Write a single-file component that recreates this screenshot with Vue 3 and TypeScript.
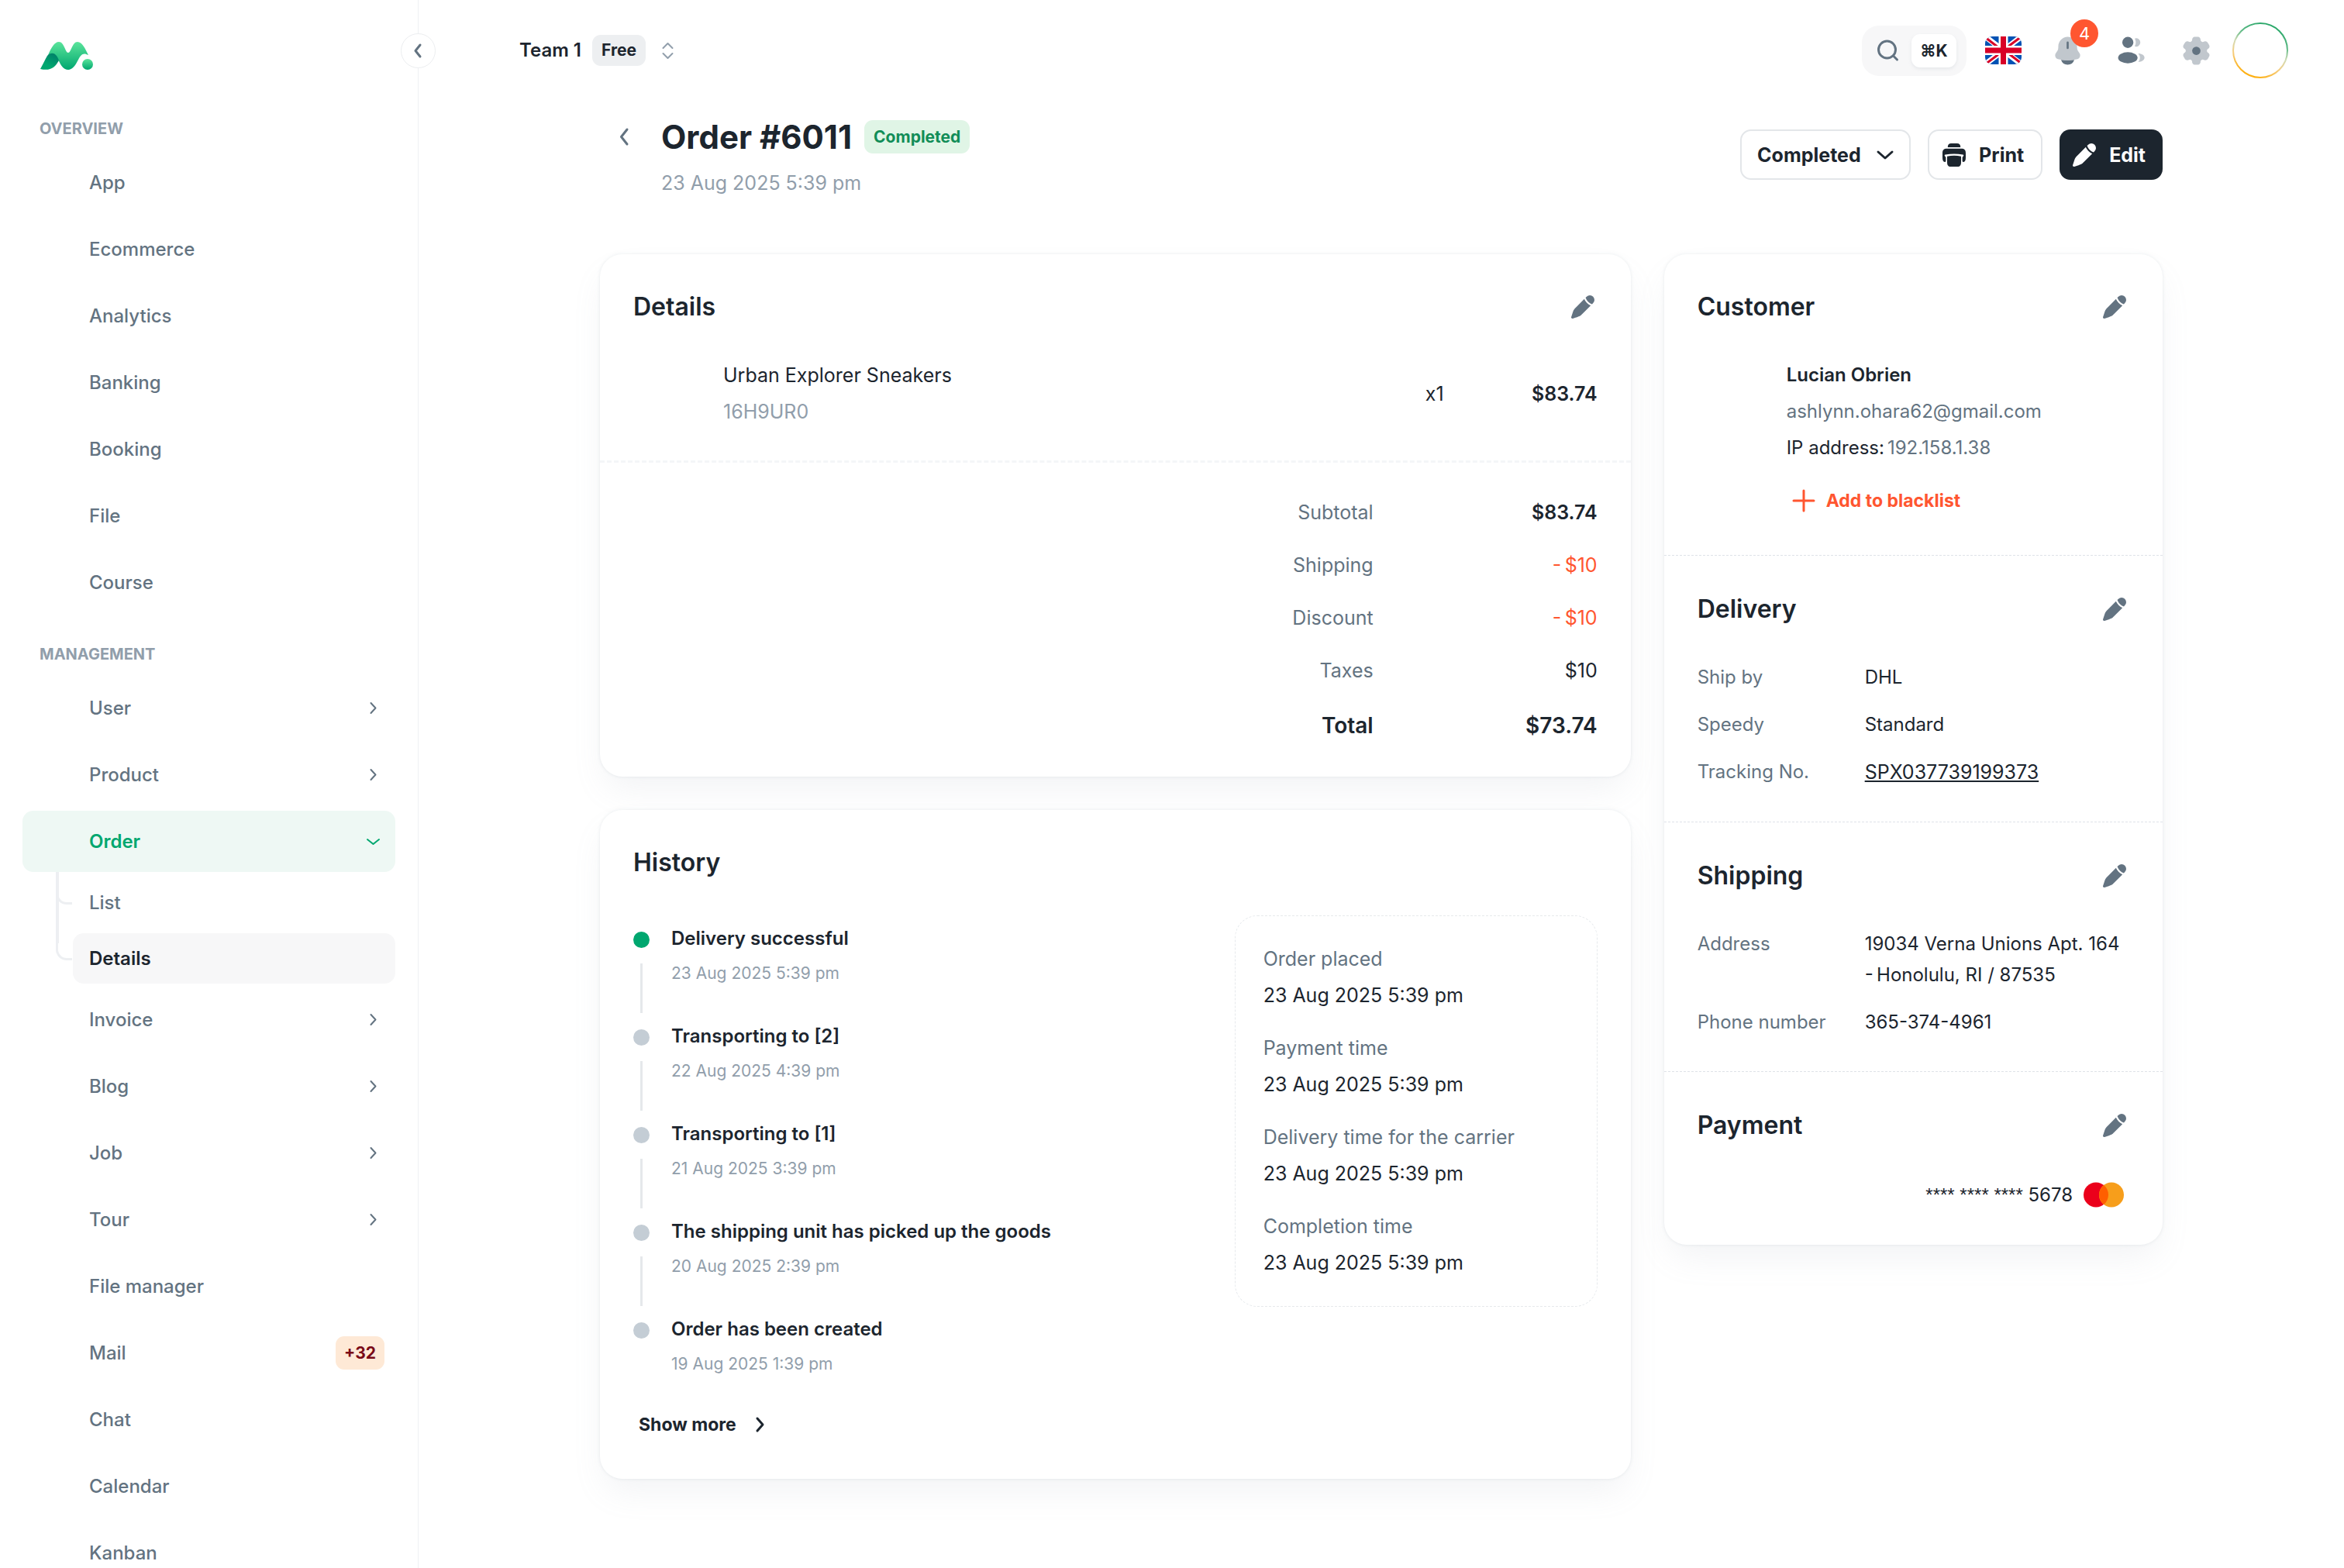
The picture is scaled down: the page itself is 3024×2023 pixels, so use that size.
<script setup lang="ts">
import { ref } from 'vue'

interface NavItem {
  label: string
  expandable?: boolean
  active?: boolean
  badge?: string
  children?: { label: string; current?: boolean }[]
}

interface NavSection {
  title: string
  items: NavItem[]
}

const sections: NavSection[] = [
  {
    title: 'OVERVIEW',
    items: ['App', 'Ecommerce', 'Analytics', 'Banking', 'Booking', 'File', 'Course'].map((label) => ({ label })),
  },
  {
    title: 'MANAGEMENT',
    items: [
      { label: 'User', expandable: true },
      { label: 'Product', expandable: true },
      {
        label: 'Order',
        active: true,
        children: [{ label: 'List' }, { label: 'Details', current: true }],
      },
      { label: 'Invoice', expandable: true },
      { label: 'Blog', expandable: true },
      { label: 'Job', expandable: true },
      { label: 'Tour', expandable: true },
      { label: 'File manager' },
      { label: 'Mail', badge: '+32' },
      { label: 'Chat' },
      { label: 'Calendar' },
      { label: 'Kanban' },
    ],
  },
]

const status = ref('Completed')

const totals = [
  { label: 'Subtotal', value: '$83.74', kind: 'strong' },
  { label: 'Shipping', value: '-\u2009$10', kind: 'minus' },
  { label: 'Discount', value: '-\u2009$10', kind: 'minus' },
  { label: 'Taxes', value: '$10', kind: '' },
  { label: 'Total', value: '$73.74', kind: 'total' },
]

const timeline = [
  { title: 'Delivery successful', time: '23 Aug 2025 5:39 pm' },
  { title: 'Transporting to [2]', time: '22 Aug 2025 4:39 pm' },
  { title: 'Transporting to [1]', time: '21 Aug 2025 3:39 pm' },
  { title: 'The shipping unit has picked up the goods', time: '20 Aug 2025 2:39 pm' },
  { title: 'Order has been created', time: '19 Aug 2025 1:39 pm' },
]

const milestones = [
  { label: 'Order placed', value: '23 Aug 2025 5:39 pm' },
  { label: 'Payment time', value: '23 Aug 2025 5:39 pm' },
  { label: 'Delivery time for the carrier', value: '23 Aug 2025 5:39 pm' },
  { label: 'Completion time', value: '23 Aug 2025 5:39 pm' },
]

const penPath =
  'M11.4 18.161l7.396-7.396a10.3 10.3 0 0 1-3.326-2.234 10.3 10.3 0 0 1-2.235-3.327L5.839 12.6c-.577.577-.866.866-1.114 1.184a6.6 6.6 0 0 0-.749 1.211c-.173.364-.302.752-.56 1.526l-1.362 4.083a1.06 1.06 0 0 0 1.342 1.342l4.083-1.362c.775-.258 1.162-.387 1.526-.56q.647-.308 1.211-.749c.318-.248.607-.537 1.184-1.114m9.448-9.448a3.932 3.932 0 0 0-5.561-5.561l-.887.887.038.111a8.75 8.75 0 0 0 2.092 3.32 8.75 8.75 0 0 0 3.431 2.13z'
</script>

<template>
  <div class="shell">
    <aside class="sidebar">
      <a class="logo" href="#" aria-label="Home">
        <svg width="68" height="36" viewBox="0 0 68 36">
          <defs>
            <linearGradient id="logo-light" x1="0" y1="0" x2="0" y2="1">
              <stop offset="0" stop-color="#5BE49B" />
              <stop offset="1" stop-color="#00A76F" />
            </linearGradient>
            <linearGradient id="logo-dark" x1="1" y1="0" x2="0.4" y2="1">
              <stop offset="0" stop-color="#007867" />
              <stop offset="0.8" stop-color="#00A76F" />
            </linearGradient>
          </defs>
          <path
            fill="url(#logo-light)"
            d="M10 17C14 8 18 0 24 0c7 0 8 14 12 14S41 0 48 0c6 0 10 9 14 17-7-4-10 0-13 6-4 8-8 13-13 13-6 0-9-5-13-13-2-5-6-9-13-6z"
          />
          <path fill="url(#logo-dark)" d="M0 35c4-7 6-12 9-17 2-3 8-5 11-1 2 2 3 4 4 7-5 9-11 14-24 11z" />
          <circle cx="61" cy="29" r="7" fill="url(#logo-light)" />
        </svg>
      </a>
      <nav aria-label="Main">
        <section v-for="section in sections" :key="section.title" class="nav-section">
          <h2 class="nav-title">{{ section.title }}</h2>
          <ul class="nav-list">
            <li v-for="item in section.items" :key="item.label">
              <a href="#" class="nav-item" :class="{ active: item.active }">
                <span class="nav-label">{{ item.label }}</span>
                <span v-if="item.badge" class="nav-badge">{{ item.badge }}</span>
                <svg v-if="item.expandable" class="nav-arrow" viewBox="0 0 29 29">
                  <path d="M11.5 8l6 6.5-6 6.5" />
                </svg>
                <svg v-if="item.active" class="nav-arrow" viewBox="0 0 29 29">
                  <path d="M7 12l7.5 6 7.5-6" />
                </svg>
              </a>
              <ul v-if="item.children" class="sub-list">
                <li v-for="child in item.children" :key="child.label" class="sub-row">
                  <a href="#" class="sub-item" :class="{ current: child.current }">{{ child.label }}</a>
                </li>
              </ul>
            </li>
          </ul>
        </section>
      </nav>
      <button class="collapse" type="button" aria-label="Collapse menu">
        <svg width="29" height="29" viewBox="0 0 29 29"><path d="M17 7l-6 7.500 6 7.500" /></svg>
      </button>
    </aside>

    <div class="main">
      <header class="topbar">
        <button class="workspace" type="button">
          <span>Team 1</span>
          <span class="plan">Free</span>
          <svg width="29" height="29" viewBox="0 0 29 29"><path d="M8.500 11l6-6 6 6M8.500 18l6 6 6-6" /></svg>
        </button>
        <div class="tools">
          <button class="search" type="button" aria-label="Search">
            <svg width="34" height="34" viewBox="0 0 34 34">
              <circle cx="15.500" cy="16" r="11" />
              <path d="M23.500 24l5 5" />
            </svg>
            <kbd>⌘K</kbd>
          </button>
          <button class="tool" type="button" aria-label="Language">
            <svg class="flag" width="47" height="36" viewBox="0 0 47 36">
              <path fill="#0052B4" d="M0 0h47v36H0z" />
              <path stroke="#fff" stroke-width="7" d="M0 0l47 36M47 0L0 36" />
              <path stroke="#D80027" stroke-width="3" d="M0 1l20 15.500M47 0L27 15M0 36l20-15M47 35L27 19.500" />
              <path stroke="#fff" stroke-width="12" d="M23.500 0v36M0 18h47" />
              <path stroke="#D80027" stroke-width="7" d="M23.500 0v36M0 18h47" />
            </svg>
          </button>
          <button class="tool" type="button" aria-label="Notifications">
            <svg width="43" height="43" viewBox="0 0 24 24" fill="#637381">
              <path
                opacity="0.4"
                d="M18.750 9v.704c0 .845.24 1.671.692 2.374l1.108 1.723c1.011 1.574.239 3.713-1.520 4.210a25.800 25.800 0 0 1-14.060 0c-1.759-.497-2.531-2.636-1.520-4.210l1.108-1.723a4.400 4.400 0 0 0 .693-2.374V9c0-3.866 3.022-7 6.749-7s6.750 3.134 6.750 7"
              />
              <path
                d="M12.750 6a.75.75 0 0 0-1.500 0v4a.75.75 0 0 0 1.500 0zM7.243 18.545a5.002 5.002 0 0 0 9.513 0c-3.145.59-6.367.59-9.513 0"
              />
            </svg>
            <span class="count">4</span>
          </button>
          <button class="tool" type="button" aria-label="Contacts">
            <svg width="43" height="43" viewBox="0 0 24 24" fill="#637381">
              <circle cx="9" cy="6" r="4" />
              <ellipse cx="9" cy="17" rx="7" ry="4" />
              <path
                opacity="0.4"
                d="M21 17c0 1.657-2.036 3-4.521 3 .732-.8 1.236-1.805 1.236-2.998 0-1.195-.505-2.200-1.239-3.001C18.962 14 21 15.344 21 17M18 6a3 3 0 0 1-4.029 2.820A5.700 5.700 0 0 0 14.714 6c0-1.025-.27-1.987-.742-2.819A3 3 0 0 1 18 6.001"
              />
            </svg>
          </button>
          <button class="tool" type="button" aria-label="Settings">
            <svg width="43" height="43" viewBox="0 0 24 24" fill="#637381">
              <path
                opacity="0.4"
                d="M13.779 2.152C13.409 2 12.939 2 12 2s-1.408 0-1.779.152a2 2 0 0 0-1.090 1.083c-.094.223-.13.484-.145.863a1.620 1.620 0 0 1-.796 1.353 1.640 1.640 0 0 1-1.579.008c-.338-.178-.583-.276-.825-.308a2.030 2.030 0 0 0-1.490.396c-.318.242-.553.646-1.022 1.453-.47.807-.704 1.210-.757 1.605-.07.526.074 1.058.4 1.479.148.192.357.353.68.555.477.297.783.803.783 1.361s-.306 1.064-.782 1.360c-.324.203-.533.364-.682.556a2 2 0 0 0-.399 1.479c.053.394.287.798.757 1.605s.704 1.210 1.022 1.453c.424.323.96.465 1.490.396.242-.032.487-.13.825-.308a1.640 1.640 0 0 1 1.580.008c.486.28.774.795.795 1.353.015.38.051.64.145.863.204.49.596.88 1.090 1.083.37.152.84.152 1.779.152s1.409 0 1.779-.152a2 2 0 0 0 1.090-1.083c.094-.223.13-.483.145-.863.02-.558.309-1.074.796-1.353a1.640 1.640 0 0 1 1.579-.008c.338.178.583.276.825.308.53.07 1.066-.073 1.490-.396.318-.242.553-.646 1.022-1.453.47-.807.704-1.210.757-1.605a2 2 0 0 0-.4-1.479c-.148-.192-.357-.353-.68-.555-.477-.297-.783-.803-.783-1.361s.306-1.064.782-1.360c.324-.203.533-.364.682-.556a2 2 0 0 0 .399-1.479c-.053-.394-.287-.798-.757-1.605s-.704-1.210-1.022-1.453a2.030 2.030 0 0 0-1.490-.396c-.242.032-.487.13-.825.308a1.640 1.640 0 0 1-1.580-.008 1.620 1.620 0 0 1-.795-1.353c-.015-.38-.051-.64-.145-.863a2 2 0 0 0-1.090-1.083"
              />
              <circle cx="12" cy="12" r="3" />
            </svg>
          </button>
          <button class="avatar" type="button" aria-label="Account">
            <svg width="72" height="72" viewBox="0 0 72 72">
              <defs>
                <linearGradient id="ring" x1="0.700" y1="0" x2="0.300" y2="1">
                  <stop offset="0" stop-color="#22A565" />
                  <stop offset="0.300" stop-color="#5DB985" />
                  <stop offset="0.500" stop-color="#D3DBB5" />
                  <stop offset="0.700" stop-color="#F5CD80" />
                  <stop offset="1" stop-color="#FFAB00" />
                </linearGradient>
              </defs>
              <circle cx="36" cy="36" r="35" fill="none" stroke="url(#ring)" stroke-width="2" />
            </svg>
          </button>
        </div>
      </header>

      <main class="container">
        <div class="page-head">
          <div class="heading">
            <a class="back" href="#" aria-label="Back to orders">
              <svg width="36" height="36" viewBox="0 0 36 36"><path d="M20 8l-7.500 9.500 7.500 9.500" /></svg>
            </a>
            <div>
              <div class="title-row">
                <h1>Order #6011</h1>
                <span class="state">Completed</span>
              </div>
              <p class="placed">23 Aug 2025 5:39 pm</p>
            </div>
          </div>
          <div class="actions">
            <label class="status">
              <select v-model="status" aria-label="Order status">
                <option>Completed</option>
                <option>Pending</option>
                <option>Refunded</option>
              </select>
              <svg width="36" height="36" viewBox="0 0 36 36"><path d="M9 14l9 8 9-8" /></svg>
            </label>
            <button class="btn outlined" type="button">
              <svg width="36" height="36" viewBox="0 0 24 24" fill="currentColor">
                <path d="M6.500 5.300C6.500 3 7.500 2 9.500 2h5c2 0 3 1 3 3.300z" />
                <path
                  d="M6 6.500h12c3 0 4 1.300 4 4V14c0 2.500-.5 3.700-2 4-.6 0-.9-.4-.9-1v-3l.9-1.200c.4-.5.2-1-.4-1.100a46 46 0 0 0-15.200 0c-.6.1-.8.6-.4 1.100l.9 1.200v3c0 .6-.3 1-.9 1-1.500-.3-2-1.500-2-4v-3.500c0-2.700 1-4 4-4"
                />
                <path d="M6 13.200c3.800-.9 8.200-.9 12 0V18c0 2.800-.9 4-3 4H9c-2.100 0-3-1.200-3-4z" />
              </svg>
              Print
            </button>
            <button class="btn solid" type="button">
              <svg width="36" height="36" viewBox="0 0 24 24" fill="currentColor"><path :d="penPath" /></svg>
              Edit
            </button>
          </div>
        </div>

        <div class="grid">
          <div class="wide">
            <section class="card">
              <header class="card-head">
                <h2>Details</h2>
                <button class="pen" type="button" aria-label="Edit details">
                  <svg width="36" height="36" viewBox="0 0 24 24" fill="currentColor"><path :d="penPath" /></svg>
                </button>
              </header>
              <div class="product">
                <div class="product-text">
                  <span>Urban Explorer Sneakers</span>
                  <span class="muted">16H9UR0</span>
                </div>
                <span>x1</span>
                <span class="product-price">$83.74</span>
              </div>
              <dl class="totals">
                <div v-for="row in totals" :key="row.label" :class="row.kind">
                  <dt>{{ row.label }}</dt>
                  <dd>{{ row.value }}</dd>
                </div>
              </dl>
            </section>

            <section class="card">
              <header class="card-head"><h2>History</h2></header>
              <div class="history">
                <div class="history-main">
                  <ol class="timeline">
                    <li v-for="(event, index) in timeline" :key="event.title">
                      <div class="rail">
                        <span class="dot" :class="{ done: index === 0 }"></span>
                        <span v-if="index < timeline.length - 1" class="line"></span>
                      </div>
                      <div class="event">
                        <span class="event-title">{{ event.title }}</span>
                        <time>{{ event.time }}</time>
                      </div>
                    </li>
                  </ol>
                  <button class="text-btn" type="button">
                    Show more
                    <svg width="32" height="32" viewBox="0 0 32 32"><path d="M13 8l7 8-7 8" /></svg>
                  </button>
                </div>
                <dl class="milestones">
                  <div v-for="item in milestones" :key="item.label">
                    <dt>{{ item.label }}</dt>
                    <dd>{{ item.value }}</dd>
                  </div>
                </dl>
              </div>
            </section>
          </div>

          <aside class="card side">
            <section class="block">
              <header class="card-head">
                <h2>Customer</h2>
                <button class="pen" type="button" aria-label="Edit customer">
                  <svg width="36" height="36" viewBox="0 0 24 24" fill="currentColor"><path :d="penPath" /></svg>
                </button>
              </header>
              <div class="customer">
                <span class="customer-name">Lucian Obrien</span>
                <span class="secondary">ashlynn.ohara62@gmail.com</span>
                <span class="ip">IP address:<span class="secondary">192.158.1.38</span></span>
                <button class="text-btn danger" type="button">
                  <svg width="36" height="36" viewBox="0 0 36 36"><path d="M18 5v26M5 18h26" /></svg>
                  Add to blacklist
                </button>
              </div>
            </section>

            <section class="block">
              <header class="card-head">
                <h2>Delivery</h2>
                <button class="pen" type="button" aria-label="Edit delivery">
                  <svg width="36" height="36" viewBox="0 0 24 24" fill="currentColor"><path :d="penPath" /></svg>
                </button>
              </header>
              <dl class="facts">
                <div>
                  <dt>Ship by</dt>
                  <dd>DHL</dd>
                </div>
                <div>
                  <dt>Speedy</dt>
                  <dd>Standard</dd>
                </div>
                <div>
                  <dt>Tracking No.</dt>
                  <dd><a class="tracking" href="#">SPX037739199373</a></dd>
                </div>
              </dl>
            </section>

            <section class="block">
              <header class="card-head">
                <h2>Shipping</h2>
                <button class="pen" type="button" aria-label="Edit shipping">
                  <svg width="36" height="36" viewBox="0 0 24 24" fill="currentColor"><path :d="penPath" /></svg>
                </button>
              </header>
              <dl class="facts">
                <div>
                  <dt>Address</dt>
                  <dd>19034 Verna Unions Apt. 164<br />-&#8201;Honolulu, RI / 87535</dd>
                </div>
                <div>
                  <dt>Phone number</dt>
                  <dd>365-374-4961</dd>
                </div>
              </dl>
            </section>

            <section class="block">
              <header class="card-head">
                <h2>Payment</h2>
                <button class="pen" type="button" aria-label="Edit payment">
                  <svg width="36" height="36" viewBox="0 0 24 24" fill="currentColor"><path :d="penPath" /></svg>
                </button>
              </header>
              <div class="payment">
                <span><span class="mask">**** **** **** </span>5678</span>
                <svg width="66" height="43" viewBox="0 0 66 43" role="img" aria-label="Mastercard">
                  <circle cx="23" cy="21.500" r="16" fill="#EB001B" />
                  <circle cx="43" cy="21.500" r="16" fill="#F79E1B" />
                  <path fill="#FF5F00" d="M33 9a16 16 0 0 1 0 25 16 16 0 0 1 0-25z" />
                </svg>
              </div>
            </section>
          </aside>
        </div>
      </main>
    </div>
  </div>
</template>

<style>
body {
  margin: 0;
  background: #fff;
}
</style>

<style scoped>
.shell {
  display: flex;
  min-height: 100vh;
  background: #fff;
  color: #1c252e;
  font-family: Inter, "Liberation Sans", sans-serif;
  font-size: 24px;
  line-height: 40px;
}
.shell *,
.shell *::before,
.shell *::after {
  box-sizing: border-box;
}
h1,
h2,
p,
ul,
ol,
dl,
dd {
  margin: 0;
  padding: 0;
}
ul,
ol {
  list-style: none;
}
a {
  color: inherit;
  text-decoration: none;
}
button,
select {
  margin: 0;
  padding: 0;
  border: 0;
  background: none;
  color: inherit;
  font: inherit;
}
svg {
  display: block;
  flex: none;
}

/* Sidebar */
.sidebar {
  position: sticky;
  top: 0;
  z-index: 1;
  flex: none;
  width: 540px;
  height: 100vh;
  border-right: 1px solid #eff1f3;
}
.sidebar nav {
  height: calc(100vh - 113px);
  overflow: hidden;
  padding: 0 29px;
}
.logo {
  display: block;
  width: 68px;
  padding: 54px 0 23px;
  margin-left: 52px;
}
.nav-title {
  padding: 38px 22px 15px;
  color: #919eab;
  font-size: 20px;
  font-weight: 700;
  line-height: 30px;
}
.nav-list {
  display: flex;
  flex-direction: column;
  gap: 7px;
}
.nav-item {
  display: flex;
  align-items: center;
  height: 79px;
  padding: 0 14px 0 86px;
  border-radius: 14px;
  color: #637381;
  font-weight: 500;
}
.nav-item.active {
  background: #eef8f4;
  color: #00a76f;
  font-weight: 600;
}
.nav-label {
  flex: 1;
}
.nav-arrow {
  width: 29px;
  height: 29px;
  fill: none;
  stroke: currentColor;
  stroke-width: 2;
  stroke-linecap: round;
  stroke-linejoin: round;
}
.nav-badge {
  padding: 0 11px;
  border-radius: 11px;
  background: #fee9d6;
  color: #7a0916;
  font-size: 21px;
  font-weight: 700;
  line-height: 43px;
}
.sub-list {
  position: relative;
  display: flex;
  flex-direction: column;
  gap: 7px;
  padding: 7px 0 0 65px;
}
.sub-list::before {
  content: "";
  position: absolute;
  top: 0;
  left: 43px;
  width: 4px;
  height: 92px;
  background: #edeff2;
}
.sub-row {
  position: relative;
}
.sub-row::before {
  content: "";
  position: absolute;
  top: 12px;
  left: -22px;
  width: 21px;
  height: 23px;
  border: solid #edeff2;
  border-width: 0 0 3px 3px;
  border-bottom-left-radius: 14px;
}
.sub-item {
  display: flex;
  align-items: center;
  height: 65px;
  padding: 0 21px;
  border-radius: 14px;
  color: #637381;
  font-weight: 500;
}
.sub-item.current {
  background: #f7f7f8;
  color: #1c252e;
  font-weight: 600;
}
.collapse {
  position: absolute;
  top: 43px;
  right: -23px;
  display: grid;
  place-items: center;
  width: 45px;
  height: 45px;
  border: 1px solid #eceef0;
  border-radius: 50%;
  background: #fff;
}
.collapse path,
.back path {
  fill: none;
  stroke: #637381;
  stroke-width: 3;
  stroke-linecap: round;
  stroke-linejoin: round;
}

/* Top bar */
.main {
  flex: 1;
  min-width: 0;
}
.topbar {
  display: flex;
  align-items: center;
  justify-content: space-between;
  height: 130px;
  padding: 0 72px 0 130px;
}
.workspace {
  display: flex;
  align-items: center;
  gap: 14px;
  font-weight: 600;
}
.plan {
  padding: 0 12px;
  border-radius: 11px;
  background: #edeff1;
  font-size: 21px;
  font-weight: 700;
}
.workspace path {
  fill: none;
  stroke: #919eab;
  stroke-width: 2;
  stroke-linecap: round;
  stroke-linejoin: round;
}
.tools {
  display: flex;
  align-items: center;
  gap: 11px;
}
.search {
  display: flex;
  align-items: center;
  gap: 13px;
  height: 65px;
  padding: 0 13px 0 17px;
  border-radius: 22px;
  background: #f7f7f8;
}
.search svg {
  fill: none;
  stroke: #637381;
  stroke-width: 3;
  stroke-linecap: round;
}
kbd {
  width: 58px;
  border-radius: 11px;
  background: #fff;
  box-shadow: 0 2px 4px rgba(145, 158, 171, 0.16);
  font-family: inherit;
  font-size: 21px;
  font-weight: 700;
  line-height: 43px;
  text-align: center;
}
.tool {
  position: relative;
  display: grid;
  place-items: center;
  width: 72px;
  height: 72px;
}
.flag {
  border-radius: 9px;
  overflow: hidden;
}
.count {
  position: absolute;
  top: -4px;
  right: -4px;
  width: 36px;
  border-radius: 18px;
  background: #ff5630;
  color: #fff;
  font-size: 22px;
  line-height: 36px;
  text-align: center;
}

/* Page heading */
.container {
  max-width: 2160px;
  margin: 0 auto;
  padding: 14px 72px 115px;
  box-sizing: border-box;
}
.page-head {
  display: flex;
  justify-content: space-between;
  margin-bottom: 72px;
}
.heading {
  display: flex;
  gap: 14px;
}
.back {
  display: grid;
  place-items: center;
  width: 65px;
  height: 65px;
}
.title-row {
  display: flex;
  align-items: center;
  gap: 16px;
  height: 65px;
}
h1 {
  font-size: 42px;
  font-weight: 700;
  line-height: 65px;
}
.state {
  padding: 0 12px;
  border-radius: 11px;
  background: #e0f5e6;
  color: #118d57;
  font-size: 21px;
  font-weight: 700;
  line-height: 43px;
}
.placed {
  margin-top: 7px;
  color: #919eab;
  font-size: 25px;
  line-height: 40px;
}
.actions {
  display: flex;
  gap: 22px;
  margin-top: 23px;
}
.status,
.btn {
  display: flex;
  align-items: center;
  height: 65px;
  border-radius: 14px;
  font-size: 25px;
  font-weight: 700;
}
.status {
  position: relative;
  border: 2px solid #e3e6e9;
}
.status select {
  height: 61px;
  padding: 0 62px 0 20px;
  appearance: none;
}
.status svg {
  position: absolute;
  right: 13px;
  pointer-events: none;
  fill: none;
  stroke: currentColor;
  stroke-width: 3;
  stroke-linecap: round;
  stroke-linejoin: round;
}
.btn {
  gap: 14px;
  padding: 0 22px 0 14px;
}
.outlined {
  border: 2px solid #e3e6e9;
}
.solid {
  background: #1c252e;
  color: #fff;
}

/* Cards */
.grid {
  display: grid;
  grid-template-columns: repeat(12, 1fr);
  gap: 43px;
  align-items: start;
}
.wide {
  grid-column: span 8;
  display: flex;
  flex-direction: column;
  gap: 43px;
}
.side {
  grid-column: span 4;
}
.card {
  border-radius: 29px;
  background: #fff;
  box-shadow:
    0 0 4px rgba(145, 158, 171, 0.2),
    0 22px 43px -7px rgba(145, 158, 171, 0.12);
}
.card-head {
  display: flex;
  align-items: center;
  justify-content: space-between;
  height: 93px;
  padding: 43px 29px 0 43px;
}
.card-head h2 {
  font-size: 32px;
  font-weight: 600;
  line-height: 50px;
}
.pen {
  display: grid;
  place-items: center;
  width: 65px;
  height: 65px;
  color: #637381;
}
.product {
  display: flex;
  align-items: center;
  padding: 44px 43px 43px 159px;
  border-bottom: 3px dashed #f4f6f8;
  font-size: 25px;
}
.product-text {
  display: flex;
  flex-direction: column;
  flex: 1;
  gap: 8px;
  line-height: 39px;
}
.muted {
  color: #919eab;
}
.product-price {
  width: 198px;
  font-weight: 600;
  text-align: right;
}
.totals {
  display: flex;
  flex-direction: column;
  gap: 28px;
  padding: 44px 43px 43px;
  font-size: 25px;
}
.totals div {
  display: flex;
  justify-content: flex-end;
  text-align: right;
}
.totals dt {
  color: #637381;
}
.totals dd {
  width: 289px;
}
.totals .strong dd {
  font-weight: 600;
}
.totals .minus dd {
  color: #ff5630;
}
.totals .total {
  font-size: 28px;
  font-weight: 600;
  line-height: 46px;
}
.totals .total dt {
  color: inherit;
}

/* History */
.history {
  display: flex;
  align-items: flex-start;
  gap: 43px;
  padding: 43px;
}
.history-main {
  flex: 1;
}
.timeline li {
  display: flex;
  height: 126px;
}
.rail {
  display: flex;
  flex-direction: column;
  align-items: center;
  width: 21px;
  padding-top: 21px;
}
.dot {
  width: 21px;
  height: 21px;
  margin-bottom: 20px;
  border-radius: 50%;
  background: #c4cdd5;
}
.dot.done {
  background: #00a76f;
}
.line {
  flex: 1;
  width: 3px;
  background: #e5e8eb;
}
.event {
  display: flex;
  flex-direction: column;
  padding: 10px 0 0 28px;
}
.event-title {
  font-weight: 600;
}
.event time {
  margin-top: 9px;
  color: #919eab;
  font-size: 21px;
  line-height: 32px;
}
.text-btn {
  display: flex;
  align-items: center;
  gap: 14px;
  height: 54px;
  padding: 0 7px;
  font-size: 23px;
  font-weight: 700;
}
.text-btn path {
  fill: none;
  stroke: currentColor;
  stroke-width: 3;
  stroke-linecap: round;
  stroke-linejoin: round;
}
.milestones {
  display: flex;
  flex-direction: column;
  gap: 29px;
  width: 468px;
  padding: 36px;
  border: 1px dashed #e6e9ec;
  border-radius: 29px;
  font-size: 25px;
  line-height: 39px;
}
.milestones dt {
  margin-bottom: 8px;
  color: #637381;
}

/* Order side panel */
.block + .block {
  border-top: 1px dashed #dfe3e8;
}
.block + .block .card-head {
  height: 94px;
  padding-top: 44px;
}
.customer {
  display: flex;
  flex-direction: column;
  align-items: flex-start;
  gap: 8px;
  padding: 43px 43px 43px 158px;
  line-height: 39px;
}
.customer-name {
  font-weight: 600;
}
.secondary {
  color: #637381;
}
.ip {
  display: flex;
  gap: 4px;
}
.danger {
  gap: 11px;
  margin-top: 14px;
  padding: 0 4px;
  color: #ff5630;
}
.facts {
  display: flex;
  flex-direction: column;
  gap: 21px;
  padding: 43px;
}
.facts div {
  display: flex;
}
.facts dt {
  flex: none;
  width: 216px;
  color: #637381;
}
.tracking {
  font-size: 25px;
  text-decoration: underline;
}
.payment {
  display: flex;
  align-items: center;
  justify-content: flex-end;
  gap: 7px;
  padding: 43px;
}
.mask {
  font-family: "Liberation Sans", sans-serif;
}
</style>
